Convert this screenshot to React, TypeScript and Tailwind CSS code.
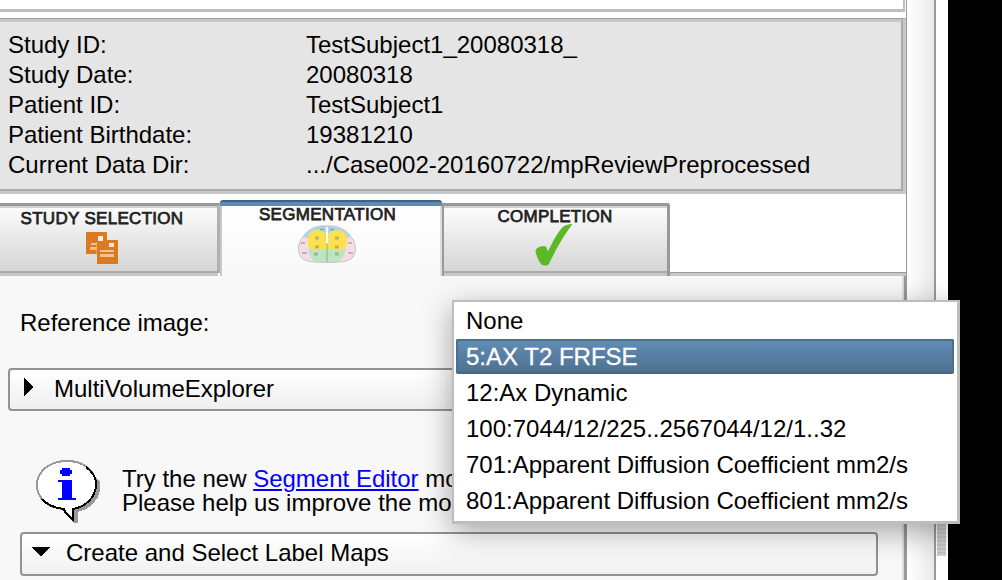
import React from "react";

const study: [string, string][] = [
  ["Study ID:", "TestSubject1_20080318_"],
  ["Study Date:", "20080318"],
  ["Patient ID:", "TestSubject1"],
  ["Patient Birthdate:", "19381210"],
  ["Current Data Dir:", ".../Case002-20160722/mpReviewPreprocessed"],
];

const options = [
  "None",
  "5:AX T2 FRFSE",
  "12:Ax Dynamic",
  "100:7044/12/225..2567044/12/1..32",
  "701:Apparent Diffusion Coefficient mm2/s",
  "801:Apparent Diffusion Coefficient mm2/s",
];

function StudyIcon() {
  return (
    <svg className="block h-[34px] w-[34px]" viewBox="0 0 34 34">
      <path fill="#dc7a20" d="M1 1h21v8h11v24H12V23H1z" />
      <path fill="#fbeee0" d="M13 5h5v5h-5zM24 12h5v4h-5z" />
      <path fill="#f0c296" d="M6 12h6v2H6zM5 16h7v3H5zM15 19h14v2H15zM15 23h14v3H15z" />
      <path fill="none" stroke="#eab27c" strokeWidth="1" strokeOpacity=".7" d="M11.500 23V11" />
    </svg>
  );
}

function ProstateIcon() {
  return (
    <svg className="block h-[38px] w-[58px]" viewBox="0 0 58 38">
      <defs>
        <clipPath id="gland">
          <path d="M29 1C40 0 49 5 53 12C58 17 59 26 55 32C50 38 39 37 29 37.500C19 37 8 38 3 32C-1 26 0 17 5 12C9 5 18 0 29 1z" />
        </clipPath>
      </defs>
      <g clipPath="url(#gland)">
        <path fill="#f5dce7" d="M0 0h58v38H0z" />
        <path fill="#a5d8e9" d="M5 12C9 5 18 0 29 1s20 4 24 11l-9 2H14z" />
        <path fill="#bde5c2" d="M10 24h38c-1 7-5 11-9 14H18c-4-3-7-7-8-14z" />
        <path fill="#f9e152" d="M28 18V10C26 5 21 5 18 5C11 6 8 12 10 18c0 4 2 7 4 7h30c3 0 5-4 5-8C50 10 46 5 40 5C36 5 32 6 30 10v8z" />
        <path fill="#fff" d="M28 2h2v17h-2z" />
      </g>
      <path stroke="#a6a879" strokeWidth="1" d="M29 18v19" />
      <path fill="none" stroke="#c7c3c8" strokeWidth="1" d="M29 1C40 0 49 5 53 12C58 17 59 26 55 32C50 38 39 37 29 37.500C19 37 8 38 3 32C-1 26 0 17 5 12C9 5 18 0 29 1z" />
      <path stroke="#766e55" strokeOpacity=".4" strokeWidth="3" d="M17 13h4M37 13h4M17 22h4M37 22h4M16 29h4M37 29h4" />
      <path stroke="#665e68" strokeOpacity=".45" strokeWidth="1.500" d="M22 4.500h4M32 4.500h4M3 18h4M50 18h4M4 28h5M50 28h5" />
    </svg>
  );
}

function CheckIcon() {
  return (
    <svg className="block h-[44px] w-[38px]" viewBox="0 0 38 44">
      <path fill="#5cb825" d="M37.500 0C29 11 20 27 14 40c-2 2.300-6 2.300-8 0C3 36 1.500 32 0.500 27.500c0-3 4-6 10.500-5l2 5C18 17 24 6 29 2q4-1.800 8.500-2z" />
    </svg>
  );
}

function InfoBubble() {
  return (
    <svg className="block h-[64px] w-[64px]" viewBox="0 0 64 64" shapeRendering="crispEdges">
      <path fill="#999" d="M57 15L64 21V31L62 37L56 45L50 49L42 52V63H38V60L34 52Z" />
      <path fill="#fff" stroke="#999" strokeWidth="2" d="M31 1C49 1 60 12 60 25C60 38 50 47 37 49V60L29 52L28 49C12 48 1 38 1 25C1 12 13 1 31 1z" />
      <path fill="none" stroke="#000" strokeWidth="2" d="M50 7Q61 15 60 26C59 38 49 47 37 49V60L29 52L28 49C19 48 11 45 6 39" />
      <path fill="#00f" d="M26 8h8v2h2v4h-2v2h-8v-2h-2v-4h2zM22 20h14v18h4v2H22v-2h4V22h-4z" />
    </svg>
  );
}

const tabText = "h-[16px] whitespace-nowrap font-['Liberation_Sans'] text-[17px] leading-[16px] text-[#222] [-webkit-text-stroke:0.75px_#222]";

export default function App() {
  return (
    <div className="relative flex h-[580px] w-[1002px] overflow-hidden bg-black font-['Liberation_Sans',Arial,sans-serif] text-[24px] leading-[30px] text-black">
      <main className="flex w-[907px] shrink-0 flex-col border-r border-[#999] bg-white">
        <div className="h-[12px] w-[905px] shrink-0 border-r-2 border-b-[3px] border-[#bfbfbf]" />
        <section className="mt-[6px] h-[176px] shrink-0 border-t border-r-[3px] border-b-[3px] border-t-[#9d9d9d] border-r-[#c8c8c8] border-b-[#c8c8c8]">
          <div className="h-[172px] border-t-[3px] border-r-2 border-b-2 border-t-[#c8c8c8] border-r-[#aaa] border-b-[#aaa] bg-[#e5e5e5] pt-[8px] pl-[8px]">
            {study.map(([k, v]) => (
              <div key={k} className="flex h-[30px] whitespace-nowrap">
                <span className="w-[298px] shrink-0">{k}</span>
                <span>{v}</span>
              </div>
            ))}
          </div>
        </section>

        <nav className="mt-[6px] flex h-[76px] shrink-0 items-end">
          <div className="flex h-[76px] w-[220px] flex-col pt-[3px]">
            <div className="flex h-[70px] w-full flex-col items-center border-t-[3px] border-r-[3px] border-b-2 border-t-[#999] border-r-[#b0b0b0] border-b-[#aaa] bg-linear-to-b from-[#fcfcfc] to-[#d5d5d5] pr-[13px]">
              <div className="-mr-[13px] h-[2px] w-[217px] shrink-0 bg-[#cfcfcf]" />
              <div className={`${tabText} mt-[3px] tracking-[0.3px]`}>STUDY SELECTION</div>
              <div className="mt-[4px]"><StudyIcon /></div>
            </div>
            <div className="h-[3px] w-[218px] bg-[#c8c8c8]" />
          </div>
          <div className="flex h-[76px] w-[222px] flex-col items-center rounded-t-[3px] bg-linear-to-b from-white to-[#f8f8f8]">
            <div className="h-[6px] w-full shrink-0 rounded-t-[3px] border-t-2 border-[#42617c] bg-[#5f8bb3]" />
            <div className="flex w-full flex-1 flex-col items-center border-r-2 border-l-2 border-r-[#ddd] border-l-[#c8c8c8]">
              <div className={`${tabText} mt-px mr-[7px] tracking-[0.3px]`}>SEGMENTATION</div>
              <div className="mt-[2px] mr-[8px]"><ProstateIcon /></div>
            </div>
          </div>
          <div className="h-[73px] w-[228px] rounded-tr-[3px] border-t-[3px] border-r-[3px] border-l-2 border-[#999]">
            <div className="flex h-[70px] w-full flex-col items-center border-t-2 border-b-[3px] border-t-[#d0d0d0] border-b-[#c8c8c8]">
              <div className="flex h-[65px] w-full flex-col items-center border-b-2 border-[#aaa] bg-linear-to-b from-[#fcfcfc] to-[#d5d5d5]">
                <div className={`${tabText} mt-px mr-px tracking-[0.25px]`}>COMPLETION</div>
                <div className="-mt-px mr-[3px]"><CheckIcon /></div>
              </div>
            </div>
          </div>
          <div className="h-[4px] flex-1 border-t border-[#999] bg-[#c8c8c8]" />
        </nav>

        <section className="flex min-h-0 flex-1 flex-col border-r-2 border-[#999] bg-[#f8f8f8]">
          <div className="flex flex-1 flex-col border-r-2 border-[#ddd]">
            <div className="mt-[32px] ml-[20px] h-[30px]">Reference image:</div>
            <div className="mt-[30px] ml-[8px] flex h-[43px] shrink-0 items-center rounded-[4px] border-2 border-[#929292] bg-linear-to-b from-white to-[#efefef] pb-[2px] pl-[14px]">
              <svg className="mb-[3px] h-[18px] w-[10px]" viewBox="0 0 10 18" shapeRendering="crispEdges"><path d="M0 0l10 9-10 9z" /></svg>
              <span className="ml-[20px]">MultiVolumeExplorer</span>
            </div>
            <div className="mt-[49px] ml-[36px] flex h-[64px] shrink-0">
              <InfoBubble />
              <div className="mt-[7px] ml-[22px] leading-[24px] whitespace-nowrap">
                <div>Try the new <span className="text-[#00f] underline decoration-2 underline-offset-2">Segment Editor</span> module!</div>
                <div>Please help us improve the module.</div>
              </div>
            </div>
            <div className="mt-[8px] ml-[20px] flex h-[44px] w-[858px] shrink-0 items-center rounded-[4px] border-2 border-[#929292] bg-linear-to-b from-white to-[#f1f1f1] pb-[2px] pl-[10px]">
              <svg className="mb-[3px] h-[10px] w-[18px]" viewBox="0 0 18 10" shapeRendering="crispEdges"><path d="M0 0h18l-9 10z" /></svg>
              <span className="ml-[16px]">Create and Select Label Maps</span>
            </div>
          </div>
        </section>
      </main>
      <aside className="w-[29px] shrink-0 border-r-2 border-[#999] bg-linear-to-r from-white to-[#eaeaea]" />
      <aside className="w-[12px] shrink-0 bg-white pt-[512px] pl-px">
        <div className="h-[44px] w-[9px] bg-[repeating-linear-gradient(to_bottom,#c2c2c2_0_2px,#cecece_2px_4px)]" />
      </aside>

      <div className="absolute top-[300px] left-[452px] h-[224px] w-[508px] border-t-2 border-r-[3px] border-b-[3px] border-l-2 border-[#bdbdbd] bg-white pt-px pr-[3px] pl-[2px] shadow-[0_8px_28px_rgba(0,0,0,0.34)]">
        {options.map((o, i) =>
          i === 1 ? (
            <div key={o} className="h-[36px]">
              <div className="h-[35px] rounded-[2px] border-2 border-[#4c6f91] border-b-[#4a6885] bg-linear-to-b from-[#618cb6] to-[#4e7190] pl-[8px] leading-[32px] text-white [-webkit-text-stroke:0.3px_white]">{o}</div>
            </div>
          ) : (
            <div key={o} className="h-[36px] pl-[10px] leading-[36px] whitespace-nowrap">{o}</div>
          )
        )}
      </div>
    </div>
  );
}
